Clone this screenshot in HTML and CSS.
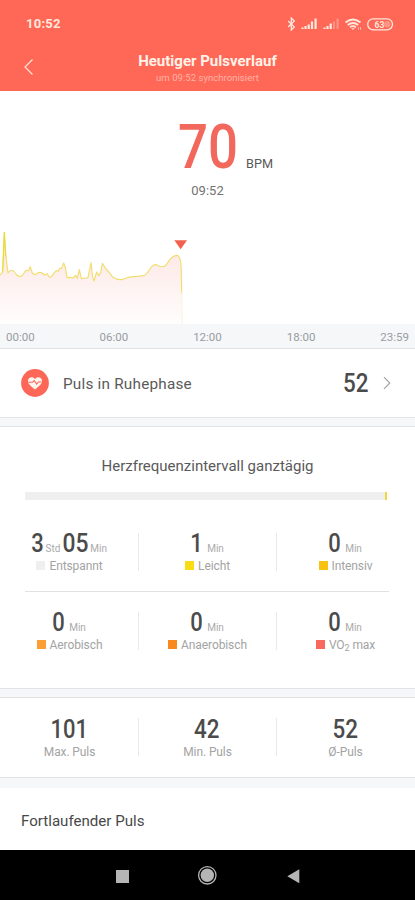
FILE: index.html
```html
<!DOCTYPE html>
<html lang="de">
<head>
<meta charset="utf-8">
<meta name="viewport" content="width=device-width, initial-scale=1">
<title>Heutiger Pulsverlauf</title>
<link rel="stylesheet" href="styles.css">
</head>
<body>
<header class="header">
  <div class="status">
    <span class="clock">10:52</span>
    <svg class="status-icons" width="108" height="16" viewBox="0 0 108 16" fill="none" stroke="#ffe9dc">
      <path d="M1.2 5 7.3 11 4.3 14V2L7.3 5 1.2 11" stroke-width="1.3"/>
      <path d="M15.5 13v-1.5M18.5 13v-3M21.7 13V8.500M25 13V5.500M28.600 13V2.500" stroke-width="2.200"/>
      <path d="M37.500 13v-1.500M40.500 13v-3M43.700 13V7.500" stroke-width="2.200"/>
      <path d="M47 13V5.500M50.600 13V2.500" stroke-width="2.200" opacity=".35"/>
      <path d="M58.500 6.500Q66 .5 73.500 6.500M60.800 9Q66 5 71.200 9M63 11.300Q66 9 69 11.300" stroke-width="1.800"/>
      <path d="M64.200 12.200h3.600L66 14z" fill="#ffe9dc" stroke="none"/>
      <path d="M71.500 11v3M73.500 14v-3" stroke-width=".8" opacity=".7"/>
      <rect x="80.700" y="2.800" width="24.800" height="11" rx="5.500" stroke-width="1.300"/>
      <rect x="97" y="5" width="6.500" height="6.600" rx="3" fill="#ffe9dc" stroke="none" opacity=".35"/>
      <text x="92.500" y="11.500" class="battery" text-anchor="middle">63</text>
    </svg>
  </div>
  <div class="titlebar">
    <svg class="back" width="10" height="18" viewBox="0 0 10 18" fill="none" stroke="#ffe3d8" stroke-width="1.200"><path d="M8.500 1.500 1 9l7.500 7.500"/></svg>
    <div class="titles">
      <h1>Heutiger Pulsverlauf</h1>
      <p>um 09:52 synchronisiert</p>
    </div>
  </div>
</header>
<main>
  <section class="current">
    <div class="bpm">
      <svg class="num big" width="58" height="44"><text x="-1" y="44" textLength="60" lengthAdjust="spacingAndGlyphs">70</text></svg>
      <span>BPM</span>
    </div>
    <div class="time">09:52</div>
  </section>
  <svg class="chart" width="415" height="99" viewBox="0 0 1245 297">
    <defs>
      <linearGradient id="fade" x1="0" y1="0" x2="0" y2="1"><stop offset="0" stop-color="#fde4e2"/><stop offset=".35" stop-color="#fdecea"/><stop offset="1" stop-color="#fffdfd"/></linearGradient>
    </defs>
    <path fill="url(#fade)" d="M0 150 8 142 13 22 18 95 24 144 36 134 50 150 66 155 77 137 86 136 91 125 97 144 109 147 119 142 133 150 142 146 152 156 161 145 169 137 174 139 180 129 185 130 191 114 196 127 201 158 220 159 227 151 232 160 238 134 244 161 257 159 264 158 273 113 278 157 282 168 290 141 296 152 302 143 307 115 316 129 Q326 140 338 156Q354 167 369 163Q389 153 412 154L432 152Q442 146 454 126Q463 114 475 122Q491 130 500 118Q514 92 530 91Q543 90 544 140L547 297H0z"/>
    <path fill="none" stroke="#f1de70" stroke-width="3.500" stroke-linejoin="round" d="M0 150 8 142 13 22 18 95 24 144 Q36 126 50 150Q63 160 70 147L77 137 86 136 91 125 97 144Q103 151 109 147Q121 136 133 150L142 146Q150 168 161 145L169 137 174 139 180 129 185 130 191 114 196 127 201 158 210 157 220 159 227 151 232 160 238 134 244 161 257 159 264 158 273 113 278 157 282 168 290 141 296 152 302 143 307 115 316 129 Q326 140 338 156Q354 167 369 163Q389 153 412 154L432 152Q442 146 454 126Q463 114 475 122Q491 130 500 118Q514 92 530 91Q543 90 544 140L545 205"/>
    <path d="M8 140 13 22 17 95" fill="none" stroke="#e7dc2e" stroke-width="3"/>
    <path d="M545 200 547 297" stroke="#f8efcc" stroke-width="2"/>
    <path d="M523 46H561L542 73z" fill="#f2604f"/>
  </svg>
  <div class="axis"><span>00:00</span><span>06:00</span><span>12:00</span><span>18:00</span><span>23:59</span></div>
  <section class="resting">
    <svg width="28" height="28" viewBox="0 0 28 28"><circle cx="14" cy="14" r="13.900" fill="#fd6757"/><path d="M14 20.500C9.500 17 7 14.800 7 12c0-4.400 5.200-4.700 7-1.800 1.800-2.900 7-2.600 7 1.800 0 2.800-2.500 5-7 8.500z" fill="#fff4ee"/><path d="M7.500 13.300h4l1.700-1.800 2.500 3.500 1.800-2h3" fill="none" stroke="#fd6757" stroke-width="1.100"/></svg>
    <span class="resting-label">Puls in Ruhephase</span>
    <svg class="num" width="24" height="18"><text x="-1" y="18" textLength="25.500" lengthAdjust="spacingAndGlyphs">52</text></svg>
    <svg class="next" width="8" height="14" viewBox="0 0 8 14" fill="none" stroke="#a5a5a5" stroke-width="1.200"><path d="M1 1.200 6.800 7 1 12.800"/></svg>
  </section>
  <section class="intervals">
    <h2>Herzfrequenzintervall ganztägig</h2>
    <div class="bar"><i></i></div>
    <div class="grid">
      <div class="cell"><div class="value duration"><svg class="num" width="11" height="18"><text x="-.7" y="18" textLength="12.500" lengthAdjust="spacingAndGlyphs">3</text></svg><small>Std</small><svg class="num" width="25" height="18"><text x="-.5" y="18" textLength="26" lengthAdjust="spacingAndGlyphs">05</text></svg><small>Min</small></div><div class="label"><i class="relaxed"></i>Entspannt</div></div>
      <div class="cell"><div class="value"><svg class="num" width="11" height="18"><text x="-.7" y="18" textLength="12.500" lengthAdjust="spacingAndGlyphs">1</text></svg><small>Min</small></div><div class="label"><i class="light"></i>Leicht</div></div>
      <div class="cell"><div class="value"><svg class="num" width="11" height="18"><text x="-.7" y="18" textLength="12.500" lengthAdjust="spacingAndGlyphs">0</text></svg><small>Min</small></div><div class="label"><i class="intense"></i>Intensiv</div></div>
    </div>
    <hr>
    <div class="grid">
      <div class="cell"><div class="value"><svg class="num" width="11" height="18"><text x="-.7" y="18" textLength="12.500" lengthAdjust="spacingAndGlyphs">0</text></svg><small>Min</small></div><div class="label"><i class="aerobic"></i>Aerobisch</div></div>
      <div class="cell"><div class="value"><svg class="num" width="11" height="18"><text x="-.7" y="18" textLength="12.500" lengthAdjust="spacingAndGlyphs">0</text></svg><small>Min</small></div><div class="label"><i class="anaerobic"></i>Anaerobisch</div></div>
      <div class="cell"><div class="value"><svg class="num" width="11" height="18"><text x="-.7" y="18" textLength="12.500" lengthAdjust="spacingAndGlyphs">0</text></svg><small>Min</small></div><div class="label"><i class="max"></i><span>VO<sub>2</sub> max</span></div></div>
    </div>
  </section>
  <section class="summary grid">
    <div class="cell"><div class="value"><svg class="num" width="35" height="18"><text x="-1.500" y="18.500" textLength="37.500" lengthAdjust="spacingAndGlyphs">101</text></svg></div><div class="label">Max. Puls</div></div>
    <div class="cell"><div class="value"><svg class="num" width="25" height="18"><text x="-1" y="18.500" textLength="25.500" lengthAdjust="spacingAndGlyphs">42</text></svg></div><div class="label">Min. Puls</div></div>
    <div class="cell"><div class="value"><svg class="num" width="25" height="18"><text x="-.5" y="18.500" textLength="25.500" lengthAdjust="spacingAndGlyphs">52</text></svg></div><div class="label">Ø-Puls</div></div>
  </section>
  <section class="continuous">Fortlaufender Puls</section>
</main>
<nav class="nav">
  <svg width="415" height="50" fill="#b5b5b5"><rect x="116" y="20" width="13" height="13"/><circle cx="207.300" cy="25.300" r="6.700"/><circle cx="207.300" cy="25.300" r="8.700" fill="none" stroke="#b5b5b5" stroke-width="1.300"/><path d="M287.300 26.300 299.300 19.300v14z"/></svg>
</nav>
</body>
</html>
```

FILE: styles.css
```css
* { box-sizing: border-box; margin: 0; padding: 0; }
body { width: 415px; height: 900px; overflow: hidden; background: #f6f7f9; font-family: Roboto, "Liberation Sans", sans-serif; color: #5a5a5a; }
svg { display: block; flex: none; }

.header { height: 91px; background: #ff6757; color: #fff3e9; }
.status { height: 48px; padding: 16px 20px 0 26px; display: flex; justify-content: space-between; align-items: flex-start; }
.clock { font-size: 13px; line-height: 16px; font-weight: 700; letter-spacing: .25px; color: #ffe8dc; }
.status-icons { margin-right: .5px; }
.battery { font: 700 8.500px Roboto, sans-serif; fill: #ffe9dc; stroke: none; }
.titlebar { display: flex; align-items: flex-start; padding: 4px 24px 0; }
.back { margin-top: 6px; }
.titles { flex: 1; text-align: center; margin-right: 10px; }
h1 { padding-bottom: 1px; font-size: 15px; line-height: 18px; font-weight: 700; }
.titles p { font-size: 9.5px; line-height: 14px; color: #ffb5a8; letter-spacing: .05px; }

.current { height: 134px; padding-top: 33px; background: #fff; }
.bpm { display: flex; align-items: baseline; gap: 9px; padding-left: 179px; height: 44px; }
.bpm span { font-size: 12.700px; line-height: 16px; }
.time { margin-top: 15px; text-align: center; font-size: 13px; line-height: 16px; color: #737373; }
.num { overflow: visible; }
.num text { font: 500 25.500px Roboto, sans-serif; fill: #4b4b4b; }
.num.big text { font-size: 61.500px; fill: #f2685d; }
.chart { background: #fff; }
.axis { height: 25px; padding: 0 6px; display: flex; justify-content: space-between; background: #f5f7f9; border-bottom: 1px solid #dfe2e4; font-size: 11.500px; line-height: 26px; color: #989da1; }

.resting { height: 69px; padding: 0 24px 0 21px; display: flex; align-items: center; background: #fff; border-bottom: 1px solid #e2e6e8; }
.resting-label { flex: 1; padding: 2px 0 0 14px; font-size: 15.300px; letter-spacing: .22px; }
.next { margin-left: 15px; }

.intervals { margin-top: 8px; height: 263px; background: #fff; border: solid #e0e4e6; border-width: 1px 0; }
h2 { padding-top: 29px; text-align: center; font-size: 15px; line-height: 20px; font-weight: 400; }
.bar { margin: 16px 28px 0 25px; height: 8px; background: #efefef; display: flex; justify-content: flex-end; }
.bar i { width: 2px; background: #f0d83c; }
.grid { display: grid; grid-template-columns: repeat(3, 1fr); padding-left: 1px; }
.intervals .grid { margin-top: 33px; }
.cell { height: 38px; padding-top: 1px; border-right: 1px solid #e9e9e9; }
.cell:last-child { border-right-color: transparent; }
.value { display: flex; justify-content: center; align-items: baseline; height: 18px; gap: 5px; }
.value.duration { gap: 2.500px; }
.value small { font-size: 10px; line-height: 12px; color: #aaa; }
.label { margin-top: 6px; display: flex; justify-content: center; align-items: center; gap: 4px; font-size: 12px; letter-spacing: -.1px; line-height: 16px; color: #a3a3a3; }
.label i { width: 9px; height: 9px; margin-top: -1px; }
.label sub { font-size: 9px; line-height: 0; vertical-align: -2px; }
.relaxed { background: #efefef; }
.light { background: #fadc14; }
.intense { background: #f9c211; }
.aerobic { background: #fb9f35; }
.anaerobic { background: #f9891e; }
.max { background: #f9685c; }
hr { border: 0; height: 1px; margin: 20px 26px 0 25px; background: #e1e1e1; }
.intervals hr + .grid { margin-top: 20px; }

.summary { margin-top: 8px; height: 81px; padding-top: 20px; background: #fff; border: solid #e0e2e4; border-width: 1px 0; }
.summary .label { margin-top: 7px; }
.continuous { margin-top: 10px; height: 62px; padding: 23px 21px; background: #fff; font-size: 15.100px; line-height: 20px; color: #484848; }
.nav { height: 50px; background: #000; }
```
